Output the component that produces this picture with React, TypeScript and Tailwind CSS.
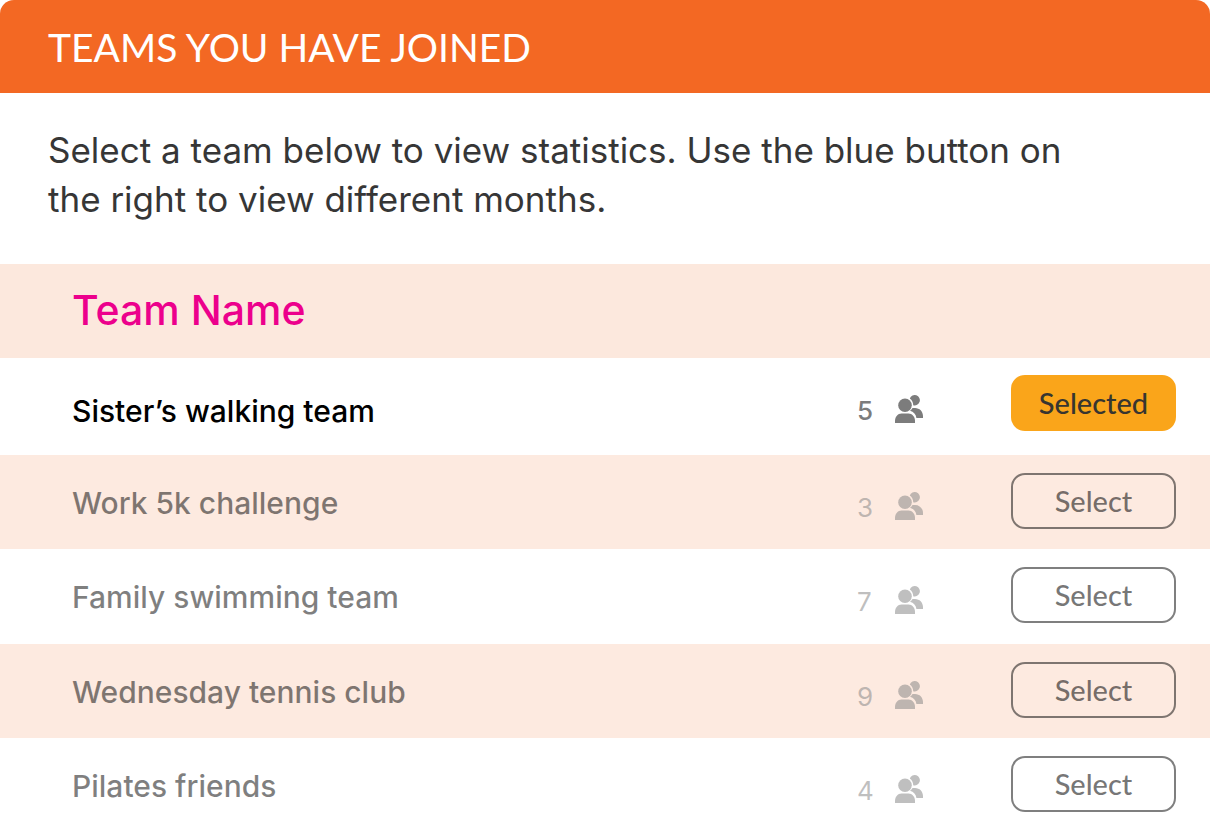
import clsx from "clsx";

type Team = { name: string; members: number; selected?: boolean };

const teams: Team[] = [
  { name: "Sister’s walking team", members: 5, selected: true },
  { name: "Work 5k challenge", members: 3 },
  { name: "Family swimming team", members: 7 },
  { name: "Wednesday tennis club", members: 9 },
  { name: "Pilates friends", members: 4 },
];

const MembersIcon = () => (
  <svg viewBox="0 0 28 28" className="size-7" fill="currentColor" aria-hidden="true">
    <circle cx="10" cy="10.2" r="6.8" />
    <path d="M14.8 3.4A5.2 5.2 0 1 1 18.2 10.2A8.2 8.2 0 0 0 14.8 3.4Z" />
    <path d="M17.5 13H20c4.6 0 8 3.6 8 8v2h-6.6c-.3-3.6-2.7-6.2-6.4-7.2 1.2-.7 2-1.6 2.5-2.8Z" />
    <path d="M0 28v-2c0-4.2 2.8-7.4 6.5-7.4h7c3.7 0 6.5 3.2 6.5 7.4v2Z" />
  </svg>
);

const TeamRow = ({ name, members, selected }: Team) => (
  <tr
    className={clsx(
      "align-top even:bg-[linear-gradient(to_left,#fce8dd_20px,#fdeae0_20px)] last:h-[94px]",
      selected ? "h-[97px]" : "h-[95px] even:h-[94px]",
    )}
  >
    <td
      className={clsx(
        "pl-[72px] text-[30px] leading-9 font-medium",
        selected ? "pt-[35px] text-black" : "pt-[30px] text-black/50",
      )}
    >
      {name}
    </td>
    <td className="w-[66px] pt-[37px]">
      <div
        className={clsx(
          "flex items-start justify-between text-[26px] leading-8",
          selected ? "font-medium text-[#7c7c7c]" : "text-[#808080]/50",
        )}
      >
        <span>{members}</span>
        <MembersIcon />
      </div>
    </td>
    <td className={clsx("w-[287px] pr-[34px]", selected ? "pt-[17px]" : "pt-[18px]")}>
      <button
        type="button"
        aria-pressed={!!selected}
        className={clsx(
          "ml-auto block h-14 w-[165px] rounded-[14px] font-[Lato,sans-serif] text-[29px] leading-8 font-medium",
          selected ? "bg-[#faa51a] text-[#373530]" : "border-2 border-black/50 text-black/55",
        )}
      >
        {selected ? "Selected" : "Select"}
      </button>
    </td>
  </tr>
);

const App = () => (
  <section className="overflow-hidden rounded-t-[14px] bg-white font-[Inter,sans-serif]">
    <h1 className="bg-[#f36823] px-12 pt-[25px] pb-[23px] font-[Lato,sans-serif] text-[39px] leading-[45px] text-white">
      TEAMS YOU HAVE JOINED
    </h1>
    <p className="max-w-[1160px] px-12 pt-[33px] pb-10 text-[35px] leading-[49px] text-[#363636]">
      Select a team below to view statistics. Use the blue button on the right to view different months.
    </p>
    <table className="w-full border-collapse text-left">
      <thead>
        <tr className="h-[94px] bg-[#fce8dd]">
          <th scope="col" colSpan={3} className="pl-[72px] text-[41px] font-medium text-[#ec008c]">
            Team Name
          </th>
        </tr>
      </thead>
      <tbody>
        {teams.map((team) => (
          <TeamRow key={team.name} {...team} />
        ))}
      </tbody>
    </table>
  </section>
);

export default App;
